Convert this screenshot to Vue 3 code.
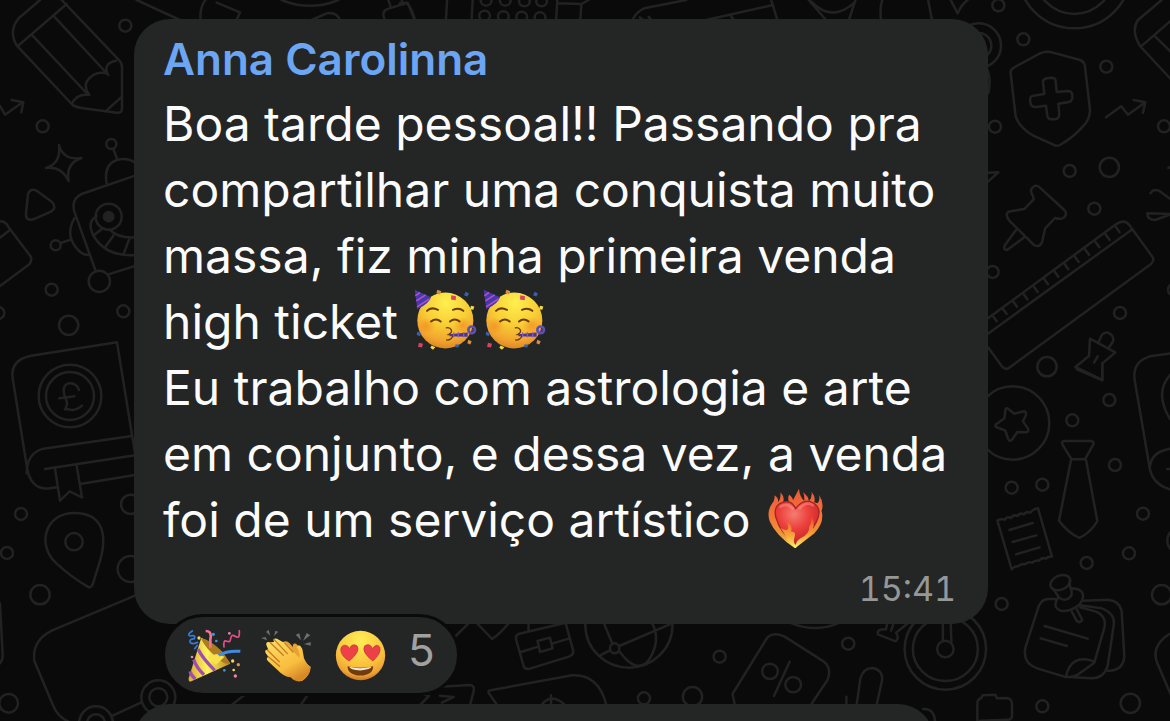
<script setup>
const author = 'Anna Carolinna'
const lines = [
  { text: 'Boa tarde pessoal!! Passando pra' },
  { text: 'compartilhar uma conquista muito' },
  { text: 'massa, fiz minha primeira venda' },
  { text: 'high ticket', party: 2 },
  { text: 'Eu trabalho com astrologia e arte' },
  { text: 'em conjunto, e dessa vez, a venda' },
  { text: 'foi de um serviço artístico', heart: true }
]
const time = '15:41'
const reactionCount = 5
const rulerTicks = [[50,964],[80,942],[111,920],[142,898],[173,876],[204,853],[235,830],[265,808],[296,786],[327,764],[358,742],[389,720],[419,697]]
const holes = [[225,2],[275,2],[325,4],[370,4],[221,47],[270,49],[318,50],[366,52]]
</script>

<template>
  <main class="chat">
    <svg class="wallpaper" viewBox="0 0 1170 721" preserveAspectRatio="xMidYMid slice" aria-hidden="true">
      <!-- upper left -->
      <g transform="scale(.33333)">
        <path d="M120 0 55 56Q25 93 50 136L215 312Q225 322 250 325L350 338Q366 340 366 325V200Q366 188 355 178L185 0M55 137 200 12M97 106 265 285M160 47 325 225M215 312Q230 280 268 285Q243 252 276 228Q292 214 322 220Q310 190 348 182M320 331 366 290" />
        <circle cx="376" cy="77" r="18" /><circle cx="128" cy="379" r="18" />
        <path d="M0 318 15 344 68 307M35 300 70 307 64 337" />
        <path d="M177 435Q190 482 244 474Q196 491 206 543Q185 498 138 504Q184 490 177 435Z" />
        <path d="M84 582Q91 563 110 572L156 606Q172 623 153 635L100 658Q76 664 78 640Z" />
        <circle cx="334" cy="432" r="15" /><path d="M340 447 352 478M320 550Q310 495 350 480Q380 472 405 487M405 527 245 582Q213 597 223 635L286 810M325 823 405 798M223 655Q195 705 230 745Q245 765 265 765M212 719 182 729M290 648Q260 665 279 705Q318 772 405 765M330 690Q355 715 405 712M310 684 285 703M340 707 315 742M389 714 370 764" />
        <circle cx="326" cy="650" r="39" /><circle class="dot" cx="326" cy="650" r="14" /><circle cx="167" cy="736" r="15" /><circle cx="298" cy="844" r="32" />
        <path d="M0 665Q15 660 28 685L91 768Q98 780 88 793L0 858M0 713 30 690" />
        <circle cx="155" cy="869" r="18" /><circle cx="370" cy="934" r="18" /><circle cx="206" cy="976" r="29" /><circle cx="-5" cy="939" r="18" />
      </g>
      <!-- lower left -->
      <g transform="translate(0 330) scale(.33333)">
        <path d="M351 37 93 77Q30 90 38 145L79 400Q88 483 150 475L170 472M351 37 405 370M396 318 130 356Q80 370 80 430M405 376 135 417M405 435 245 461M165 416 180 512 209 484 246 502 230 407" />
        <circle cx="210" cy="198" r="94" /><circle cx="210" cy="198" r="72" />
        <path d="M237 180C228 154 192 152 191 181C190 205 211 213 195 238H207Q225 245 246 227M178 205 223 199" />
        <circle cx="63" cy="552" r="18" /><circle cx="21" cy="669" r="18" /><circle cx="120" cy="794" r="29" /><circle cx="26" cy="1120" r="28" /><circle cx="392" cy="523" r="29" /><circle cx="392" cy="717" r="39" />
        <path d="M223 549C135 549 108 645 170 701Q215 742 263 770Q272 776 278 763L301 690C325 600 299 549 223 549Z" /><circle cx="222" cy="635" r="26" />
        <path d="M405 797 155 902Q95 933 103 993L159 1126Q172 1159 205 1175M0 820 8 975Q8 991 0 1000M338 1157 424 1117" />
        <circle cx="475" cy="1102" r="51" /><circle cx="475" cy="1102" r="27" /><circle cx="288" cy="1180" r="51" /><circle cx="288" cy="1180" r="27" />
      </g>
      <!-- upper right -->
      <g transform="translate(980 0) scale(.33333)">
        <circle cx="55" cy="16" r="18" /><circle cx="130" cy="118" r="18" /><circle cx="379" cy="200" r="18" /><circle cx="45" cy="380" r="18" /><circle cx="552" cy="379" r="18" /><circle cx="269" cy="513" r="18" /><circle cx="388" cy="502" r="29" /><circle cx="343" cy="626" r="18" /><circle cx="38" cy="816" r="18" /><circle cx="420" cy="939" r="18" /><circle cx="201" cy="1100" r="29" /><circle cx="582" cy="869" r="18" />
        <circle cx="283" cy="-84" r="169" /><circle cx="283" cy="-76" r="118" /><circle cx="-4" cy="137" r="67" /><circle cx="-4" cy="137" r="38" /><path d="M15 200Q36 225 25 280" />
        <path d="M180 160Q200 152 219 158L300 180Q314 186 315 200L330 330Q329 361 308 380Q280 412 240 435Q230 440 220 434L160 407Q120 385 107 350L92 220Q90 208 103 202Z" />
        <path d="M189 246Q188 238 200 235L215 233Q226 233 227 243L230 276 262 273Q276 273 277 286Q279 302 267 306L235 311 238 342Q237 357 225 358H215Q204 358 202 347L198 317 166 321Q151 320 151 306Q147 288 160 287L193 282Z" />
        <path d="M378 352 424 319 444 344 493 309M461 300 496 307 489 338" />
        <path d="M545 0 474 60Q452 92 480 138L575 240M486 137 575 60M525 109 575 158M565 504 575 500M24 518 55 517 24 545" />
        <path d="M512 580Q518 565 537 572L575 600M575 642 525 660Q502 660 502 640Z" />
        <path d="M159 588Q145 568 164 558Q174 554 183 566L253 630Q264 645 250 654Q240 659 225 654L195 686 187 724Q180 745 162 735L88 662Q74 645 85 635L133 627 161 598ZM108 690 75 735Q68 748 81 750L133 712" />
        <path d="M24 955 405 675Q433 655 448 675L517 770Q525 781 512 793L88 1103Q76 1112 65 1098L24 1042M24 1001 455 689" />
        <path v-for="([x, y], i) in rulerTicks" :key="i" :d="`M${x} ${y}l-13-18`" />
        <path d="M330 1016 406 1057 367 1090V1140L286 1101 327 1068ZM356 1025 366 1004Q379 992 391 1002Q404 1012 398 1026L386 1043M353 1069 342 1088" />
      </g>
      <!-- lower right -->
      <g transform="translate(980 320) scale(.33333)">
        <path d="M367 130V181L290 147M575 100 510 109Q456 125 464 180L508 438Q515 492 570 508M510 440Q515 393 575 386M575 160Q520 215 570 297M562 447H575" />
        <circle cx="98" cy="309" r="110" /><path d="M77 266Q82 262 89 270L102 281 132 274Q141 275 137 287L129 304 144 326Q147 337 136 337L112 336 96 359Q88 367 84 356L76 332 49 321Q42 315 51 311L73 295Z" />
        <path d="M252 363H332Q343 364 340 373L318 413Q315 418 309 418H280Q274 418 271 412L247 373Q244 365 252 363ZM273 420 237 602Q263 637 298 654Q333 637 352 603L318 420" />
        <circle cx="388" cy="240" r="18" /><circle cx="277" cy="301" r="18" /><circle cx="405" cy="435" r="18" /><circle cx="187" cy="494" r="18" /><circle cx="95" cy="503" r="18" /><circle cx="489" cy="581" r="18" /><circle cx="447" cy="700" r="18" /><circle cx="320" cy="729" r="18" /><circle cx="65" cy="852" r="18" /><circle cx="187" cy="1159" r="18" /><circle cx="545" cy="824" r="29" /><circle cx="451" cy="1150" r="29" /><circle cx="601" cy="662" r="39" />
        <path d="M52 601Q65 596 75 599Q80 588 93 594Q100 582 112 588Q119 577 132 583Q138 573 151 578Q158 567 174 565L216 710Q205 709 198 716Q185 711 177 722Q165 719 157 728Q143 724 136 733Q122 730 115 739Q103 737 95 748ZM88 630 158 609M98 666 169 646M108 703 179 682" />
        <path d="M227 837H208Q186 835 176 859L137 980Q125 1030 174 1046L253 1070Q275 1074 295 1063L343 1028 374 920Q379 888 348 875L300 862M301 856 365 865Q407 880 401 917L383 1038Q371 1076 335 1075L270 1071M310 842 383 839Q419 842 425 874L433 1010Q429 1054 382 1052M258 1068Q274 1003 335 1022L343 1026M194 918 323 956M182 955 261 978M275 874 291 904Q300 910 307 900L290 867" />
        <ellipse cx="241" cy="788" rx="31" ry="21" transform="rotate(-23 241 788)" /><path d="M219 806 236 831Q214 861 242 872Q272 877 300 852Q322 817 291 807L271 804 268 784M236 831Q248 844 265 836Q281 826 272 805" />
        <path d="M575 938Q510 975 532 1030L575 1130M-8 1202V1150Q-8 1138 4 1134L8 1126 46 1124 51 1135 80 1134Q97 1135 96 1156V1190Q94 1200 80 1199L0 1202" />
      </g>
      <!-- lower middle -->
      <g transform="translate(440 600) scale(.35714 .33333)">
        <path d="M44 108 80 70M104 70 146 117Q170 100 192 70M248 90V70M352 70 373 152Q375 163 363 169L252 206Q238 210 234 198L213 118Q210 106 222 101L352 68M227 156 277 139M314 131 360 116M273 123 308 113 315 145 280 156Z" />
        <ellipse cx="529" cy="75" rx="122" ry="128" /><ellipse cx="489" cy="145" rx="13" ry="15" /><path d="M459 70 483 132M502 154Q550 225 585 180Q620 120 594 70M447 167 476 151M502 138 650 70" />
        <ellipse cx="783" cy="170" rx="17" ry="18" /><ellipse cx="1143" cy="131" rx="17" ry="18" /><ellipse cx="571" cy="295" rx="17" ry="18" /><ellipse cx="707" cy="290" rx="27" ry="29" />
        <path d="M912 120Q928 92 965 110L1075 185Q1098 204 1085 240L1040 312M912 120 819 282 825 312" /><path d="M979 185L935 288" /><ellipse cx="924" cy="214" rx="22" ry="23" /><ellipse cx="989" cy="254" rx="22" ry="23" />
        <path d="M1167 312 1177 235Q1187 204 1210 204Q1240 209 1238 240L1223 312M1138 290V312M985 70Q1050 98 1115 70" />
        <ellipse cx="1415" cy="147" rx="114" ry="122" /><ellipse cx="1415" cy="147" rx="91" ry="96" /><ellipse cx="1415" cy="147" rx="23" ry="25" /><path d="M1408 70V121M1430 70 1432 125M1252 70 1249 88Q1222 87 1226 103L1276 124Q1287 116 1277 98L1310 70M1270 70 1263 92" />
        <path d="M0 260 85 255Q98 258 94 275L85 312M0 287 38 291 5 308M158 312 136 278Q134 271 145 270L370 226Q443 222 465 312M286 312Q312 280 347 312M311 286V312" />
      </g>
      <g transform="translate(400) scale(.3827 .3333)">
        <path d="M0 10 20 8 38 60M123 0 120 60M190 0 187 60M411 0 408 60M411 10 474 12 471 60M474 12 493 0M607 60Q618 35 638 25L748 0M627 52 635 60M650 51 656 58M970 0 986 60M974 15 800 60M865 48 872 60M1068 0 1113 60M1190 0 1173 60M1075 5Q1127 68 1185 10M1260 0Q1253 25 1257 60M1380 0 1390 60M1439 0 1457 40Q1467 14 1483 0" />
        <ellipse v-for="([x, y], i) in holes" :key="i" :cx="x" :cy="y" rx="14" ry="15" />
      </g>
      <g transform="translate(130) scale(.3333)"><path d="M20 0 150 60M226 0Q208 25 212 60M260 8 330 37 320 60M455 0Q540 35 625 0M545 60 590 40Q620 35 630 60M775 0 782 20M815 0 820 14M765 60Q753 37 770 28L825 10Q840 8 855 60" /></g>
      <path d="m229 707 18-14M300 706l9-13M439 686q-20 1-22 6l12 4-10 10M923 709q11-1 12 12" />
    </svg>

    <article class="bubble">
      <h1 class="author">{{ author }}</h1>
      <p class="body">
        <span v-for="line in lines" :key="line.text" class="line">{{ line.text }}{{ ' ' }}<svg v-for="n in line.party || 0" :key="n" class="party-face" viewBox="32 35 201 200" role="img" aria-label="Rosto festivo">
            <defs>
              <radialGradient :id="'skin' + n" cx=".52" cy=".18" r=".85"><stop offset="0" stop-color="#fff04f" /><stop offset=".48" stop-color="#f8cd35" /><stop offset=".8" stop-color="#f2a52e" /><stop offset="1" stop-color="#d88222" /></radialGradient>
              <radialGradient :id="'cheek' + n"><stop offset="0" stop-color="#f0791e" stop-opacity=".5" /><stop offset="1" stop-color="#f0791e" stop-opacity="0" /></radialGradient>
            </defs>
            <circle cx="126" cy="135" r="84" :fill="`url(#skin${n})`" />
            <ellipse cx="68" cy="151" rx="27" ry="25" :fill="`url(#cheek${n})`" /><ellipse cx="178" cy="149" rx="27" ry="25" :fill="`url(#cheek${n})`" />
            <path d="m34 43 49 22q-4 18-41 36z" fill="#423bab" /><path d="m36 61 14-10M39 76l28-18M41 94l38-24" fill="none" stroke="#bd4ac6" stroke-width="5" />
            <g fill="none" stroke="#6b3c0b" stroke-width="6" stroke-linecap="round"><path d="M71 106q12-13 33-3M149 103q18-8 31 3M83 138q15-12 29 0M140 138q14-12 29 0" /><path d="M129 157c13-3 24 12 7 20q21 2 5 14-6 4-11 2" stroke-width="4" /></g>
            <path d="m139 176 54-5v13l-54-2z" fill="#463697" /><circle cx="205" cy="163" r="10" fill="none" stroke="#6050b4" stroke-width="8" /><circle cx="205" cy="163" r="3" fill="#9b69c6" />
            <path d="M151 171v14M165 170v15M181 170v15" stroke="#8d54bd" stroke-width="4" />
            <g fill="#d64364"><path d="m144 59 14 3-1 12-14-2zM47 202l12 3-3 11-12-2z" /></g><g fill="#395fb5"><path d="m187 49 10 5-5 9-10-4zM42 168l12 5-5 9-9-4zM156 207h12l-3 9-9-1z" /></g><g fill="#f4d94a"><path d="m203 91 10 2-3 10-10-2zM85 210l11 5-7 8-8-6z" /></g><g fill="#da8f42"><path d="m102 43 12 4-4 10-11-4zM195 193l10 4-4 10-9-4z" /></g>
          </svg><svg v-if="line.heart" class="fire-heart" viewBox="50 20 180 190" role="img" aria-label="Coração em chamas">
            <defs>
              <linearGradient id="flame" x2="0" y2="1"><stop offset="0" stop-color="#ed573b" /><stop offset=".5" stop-color="#f57936" /><stop offset=".8" stop-color="#ef9b35" /><stop offset="1" stop-color="#ffe954" /></linearGradient>
              <radialGradient id="heart" cx=".43" cy=".3" r=".75"><stop offset="0" stop-color="#f57d70" /><stop offset=".45" stop-color="#ec403c" /><stop offset="1" stop-color="#bd202b" /></radialGradient>
              <linearGradient id="gold" x2="0" y2="1"><stop stop-color="#e94c2e" /><stop offset=".65" stop-color="#faad3d" /><stop offset="1" stop-color="#fff273" /></linearGradient>
            </defs>
            <path d="M137 205Q79 166 61 124Q51 96 66 73Q78 58 75 45Q90 55 85 67Q95 57 93 36Q110 54 98 72L122 75Q113 55 119 43Q130 50 131 60Q140 42 149 25Q151 49 165 62Q166 43 161 36Q180 50 178 65Q190 51 187 34Q200 50 195 66L205 69Q214 60 209 43Q226 67 217 92Q227 127 195 160Z" fill="url(#flame)" />
            <path d="M138 193Q91 153 83 122Q68 86 91 70Q124 53 139 85Q164 51 194 69Q221 87 201 126Q184 162 138 193Z" fill="url(#heart)" stroke="#a82421" stroke-width="4" />
            <path d="M93 79q21-13 37 6M151 84q21-22 40-9" fill="none" stroke="#ffaaa0" stroke-width="8" stroke-linecap="round" opacity=".4" />
            <path d="M139 204Q117 190 105 161L93 143Q112 156 116 145Q117 137 113 124Q131 136 125 154Q143 153 135 174Q130 184 139 195Q141 182 155 174Q182 160 180 139Q187 130 188 108Q197 132 191 145Q201 155 181 168Q153 187 139 204Z" fill="url(#gold)" />
          </svg></span>
      </p>
      <time class="time" datetime="15:41">{{ time }}</time>
    </article>

    <button class="reactions" type="button" aria-label="5 reações">
      <svg class="popper" viewBox="85 67 165 165" aria-hidden="true">
        <defs><linearGradient id="cone"><stop stop-color="#dba737" /><stop offset=".45" stop-color="#fff45d" /><stop offset="1" stop-color="#bc8720" /></linearGradient></defs>
        <path d="M128 96Q176 117 215 174L98 227Q89 231 90 218Z" fill="url(#cone)" /><path d="M127 98Q155 102 192 139L214 171Q203 183 173 154Q138 126 127 98Z" fill="#ad7b22" />
        <path d="m118 130q13 27 50 64M105 162q10 27 31 45M94 197q3 12 16 23" stroke="#9d4fae" stroke-width="10" fill="none" />
        <path d="m146 153 26 24 26-24-25-8z" fill="#fae24d" />
        <path d="M141 76Q161 76 155 102V126" stroke="#f27390" stroke-width="8" fill="none" /><path d="M180 149Q205 134 245 137" stroke="#4389de" stroke-width="9" fill="none" />
        <g fill="none" stroke-width="5" stroke-linecap="round"><path d="M101 76q-18 11-6 15 18-4 12 8-18 2-12 12 10 6 22-1M108 129l8-10" stroke="#367bdf" /><path d="M242 75v12q-1 13-14 4-9-6-12 7 0 13-11 9-12-7-9 17" stroke="#e54f86" /></g>
        <g fill="#f6d657"><circle cx="121" cy="97" r="5" /><circle cx="222" cy="166" r="5" /><circle cx="225" cy="193" r="4" /></g><g fill="#4190e9"><circle cx="164" cy="86" r="5" /><circle cx="173" cy="106" r="4" /><circle cx="197" cy="194" r="4" /></g><g fill="#f083b5"><circle cx="212" cy="83" r="4" /><circle cx="100" cy="154" r="4" /><circle cx="230" cy="211" r="5" /></g><circle cx="239" cy="177" r="5" fill="#e89148" />
      </svg>
      <svg class="clap" viewBox="303 67 159 165" aria-hidden="true">
        <defs><linearGradient id="hands" x2=".6" y2="1"><stop stop-color="#ffe16a" /><stop offset=".7" stop-color="#f8bd3e" /><stop offset="1" stop-color="#d78927" /></linearGradient></defs>
        <path d="m321 79 8-7 5 18zM306 97l14-3 4 10zM345 91l4-16 9 3zM410 87l11-4 5 21zM432 105l11-23 11 7zM435 115l20-6v11z" fill="#6b6d6e" />
        <path d="M371 110Q382 102 392 113L402 124Q400 111 411 114Q420 119 423 139L433 160Q443 177 455 183Q454 208 429 226Q408 226 392 209Z" fill="#e5a334" />
        <path d="M345 109Q340 97 354 99L378 113Q390 118 402 137L421 157Q424 138 413 125Q421 111 430 130L435 158Q444 178 454 183Q456 207 429 226Q408 231 395 215Q373 212 358 195L329 168Q318 159 328 153L320 142Q315 131 328 132L322 118Q320 106 334 110Z" fill="url(#hands)" />
        <path d="m334 111 39 38M345 101l40 43M325 133l36 35M328 153l34 29M378 113l24 26" fill="none" stroke="#c57c22" stroke-width="4" stroke-linecap="round" />
      </svg>
      <svg class="love" viewBox="524 75 151 151" aria-hidden="true">
        <defs><radialGradient id="love" cx=".5" cy=".2" r=".8"><stop stop-color="#ffed56" /><stop offset=".62" stop-color="#fac33c" /><stop offset=".87" stop-color="#efa336" /><stop offset="1" stop-color="#cc7724" /></radialGradient></defs>
        <circle cx="599.5" cy="150.500" r="73" fill="url(#love)" />
        <g fill="#ee4147" stroke="#b92f35" stroke-width="2"><path d="M566 167Q544 154 541 135Q541 120 555 120Q564 122 567 130Q575 113 589 122Q601 138 566 167Z" /><path d="M636 167Q601 140 612 122Q627 112 635 130Q648 112 657 127Q661 145 636 167Z" /></g>
        <path d="M561 182Q599 192 637 182Q637 208 599 210Q562 208 561 182Z" fill="#713c0c" /><path d="M566 184Q598 192 632 184Q630 192 599 195Q568 193 566 184Z" fill="#eee8db" />
      </svg>
      <span class="count">{{ reactionCount }}</span>
    </button>
    <section class="next-bubble" aria-hidden="true"></section>
  </main>
</template>

<style>
body { background: #0a0a0a; }
</style>
<style scoped>
.chat {
  position: relative;
  isolation: isolate;
  box-sizing: border-box;
  height: 100vh;
  overflow: hidden;
  display: flex;
  flex-direction: column;
  align-items: flex-start;
  padding: 19px 0 0 134px;
  background: #0a0a0a;
  font-family: Inter, "Liberation Sans", sans-serif;
}
.wallpaper {
  position: absolute;
  inset: 0;
  z-index: -1;
  width: 100%;
  height: 100%;
  fill: none;
  stroke: #222222;
  stroke-width: 2.5;
  stroke-linecap: round;
  stroke-linejoin: round;
}
.wallpaper * { vector-effect: non-scaling-stroke; }
.wallpaper .dot { fill: #222222; }
.bubble {
  box-sizing: border-box;
  flex: none;
  width: calc(100% - 182px);
  display: flex;
  flex-direction: column;
  padding: 10px 32px 13px 29px;
  border-radius: 36px;
  background: #242625;
}
.author {
  margin: 0 0 2px;
  color: #6ba5f3;
  font-size: 44px;
  font-weight: 600;
  line-height: 60px;
}
.body {
  margin: 0;
  color: #fbfbfb;
  font-size: 48px;
  line-height: 66px;
}
.line {
  display: block;
  height: 66px;
  white-space: nowrap;
}
.party-face, .fire-heart {
  margin: -18px 0 -8px 2px;
  vertical-align: middle;
}
.party-face { width: 67px; height: 67px; }
.fire-heart { width: 60px; height: 63px; }
.time {
  align-self: flex-end;
  margin-top: 14px;
  color: #969797;
  font-size: 34px;
  font-variant-numeric: tabular-nums;
  line-height: 44px;
}
.reactions {
  box-sizing: border-box;
  position: relative;
  flex: none;
  display: flex;
  align-items: center;
  height: 82px;
  margin: -10px 0 8px 28px;
  padding: 0 22px;
  border: 3px solid #0a0a0a;
  border-radius: 41px;
  background: #242625;
  color: #a1a1a2;
  font: 400 44px/54px Inter, "Liberation Sans", sans-serif;
}
.popper { width: 55px; height: 55px; margin-right: 18px; }
.clap { width: 53px; height: 55px; margin-right: 22px; }
.love { width: 51px; height: 51px; margin-right: 22px; }
.count { margin-bottom: 10px; }
.next-bubble {
  flex: none;
  width: calc(100% - 236px);
  height: 80px;
  border-radius: 36px;
  background: #242625;
}
</style>
